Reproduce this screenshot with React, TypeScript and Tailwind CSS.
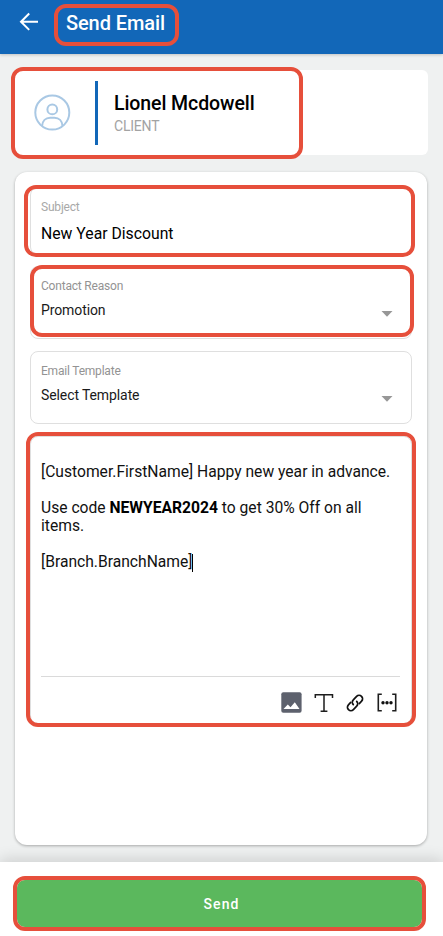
import type { ReactNode } from "react";
import clsx from "clsx";

// red rounded frame drawn over the area it annotates
function Callout({ className }: { className: string }) {
  return (
    <span
      className={clsx(
        "pointer-events-none absolute z-10 rounded-[12px] border-4 border-[#e64f3b]",
        className
      )}
    />
  );
}

function AvatarIcon() {
  return (
    <svg width="38" height="38" viewBox="0 0 38 38" fill="none" stroke="#a9c8e4" strokeWidth="2">
      <circle cx="19.3" cy="18.6" r="17" />
      <circle cx="19.3" cy="15.4" r="4.9" />
      <path d="M9.1 32c.3-5 3.6-8.2 8-8.2h4.400c4.400 0 7.700 3.200 8 8.200" />
    </svg>
  );
}

function ImageIcon() {
  return (
    <svg width="21" height="21" viewBox="0 0 21 21">
      <rect x="0.3" y="0.3" width="20.3" height="20.4" rx="2" fill="#5d616d" />
      <path d="M2.500 17l4.300-4.500 2.700 2.700 4.300-5 4.700 6.800z" fill="#fff" />
    </svg>
  );
}

function TextIcon() {
  return (
    <svg width="20" height="20" viewBox="0 0 20 20" fill="none" stroke="#1d1d1d" strokeWidth="1.5">
      <path d="M1.300 5V1.800h17.200V5M10 1.800v16.500M6.600 18.300h6.800" />
    </svg>
  );
}

function LinkIcon() {
  return (
    <svg
      width="18"
      height="18"
      viewBox="0 0 18 18"
      fill="none"
      stroke="#111"
      strokeWidth="1.7"
      strokeLinecap="round"
    >
      <path d="M7.3 10.7a3.4 3.4 0 0 1 0-4.8l3.300-3.500a3.450 3.450 0 0 1 5 4.800l-2.300 2.400" />
      <path d="M10.7 7.3a3.4 3.4 0 0 1 0 4.8l-3.300 3.500a3.450 3.450 0 0 1-5-4.800l2.300-2.400" />
    </svg>
  );
}

function PlaceholderIcon() {
  return (
    <svg width="20" height="19" viewBox="0 0 20 19" fill="none" stroke="#1d1d1d" strokeWidth="1.6">
      <path d="M4.800 1.300H1.300v16.400h3.500M15.200 1.300h3.500v16.400h-3.500" />
      <g fill="#111" stroke="none">
        <circle cx="6" cy="9.800" r="1.700" />
        <circle cx="10" cy="9.800" r="1.700" />
        <circle cx="14" cy="9.800" r="1.700" />
      </g>
    </svg>
  );
}

function Caret() {
  return (
    <svg width="12" height="6" viewBox="0 0 12 6" className="mr-[18px]">
      <path d="M0.500 0h11L6 5.800z" fill="#979797" />
    </svg>
  );
}

function SelectField({
  label,
  value,
  children,
}: {
  label: string;
  value: string;
  children?: ReactNode;
}) {
  return (
    <div className="relative h-[73px] rounded-[8px] border border-[#dfdfdf] pl-[10px] pt-[11px]">
      <div className="text-[12px] leading-4 tracking-[-0.2px] text-[#939393]">{label}</div>
      <div className="mt-[7px] flex items-center justify-between text-[14px] leading-[18px] tracking-[-0.1px] text-[#1a1a1a]">
        <span>{value}</span>
        <span className="pt-2">
          <Caret />
        </span>
      </div>
      {children}
    </div>
  );
}

export default function App() {
  return (
    <div className="flex h-[936px] w-[443px] flex-col overflow-hidden bg-[#eff1f1] font-[Roboto,sans-serif] text-black">
      <header className="relative z-10 flex h-[54px] shrink-0 items-start bg-[#1267b8] shadow-[0_1px_3px_rgba(0,0,0,0.2)]">
        <svg
          width="20"
          height="20"
          viewBox="0 0 20 20"
          fill="none"
          stroke="#fff"
          strokeWidth="2"
          className="ml-[19px] mt-[12px]"
        >
          <path d="M19 9.700H2.500M10.200 1.500L2 9.700l8.200 8.200" />
        </svg>
        <h1 className="relative ml-[27px] mt-[11px] text-[20px] font-medium leading-6 tracking-[-0.1px] text-white">
          Send Email
          <Callout className="-left-[12px] -top-[7px] h-[42px] w-[125px]" />
        </h1>
      </header>

      <main className="flex flex-1 flex-col pl-[15px] pr-4">
        <section className="relative -mr-px mt-4 flex h-[85px] items-center rounded-[6px] bg-white">
          <div className="ml-[18px]">
            <AvatarIcon />
          </div>
          <div className="ml-6 mt-px h-[64px] w-[3px] bg-[#1267b8]" />
          <div className="ml-4 pt-[3px]">
            <div className="text-[19.5px] font-medium leading-6 tracking-[-0.08px]">Lionel Mcdowell</div>
            <div className="text-[14px] leading-5 tracking-[-0.2px] text-[#a3a3a3]">CLIENT</div>
          </div>
          <Callout className="-left-[4px] -top-[3px] h-[92px] w-[292px]" />
        </section>

        <section className="mt-[17px] flex h-[673px] flex-col rounded-[12px] bg-white px-[15px] pt-[15px] shadow-[0_1px_3px_rgba(0,0,0,0.3)]">
          <div className="relative h-[68px] rounded-[8px] border border-[#dfdfdf] pl-[10px] pt-[11px]">
            <div className="text-[12px] leading-4 tracking-[-0.2px] text-[#a8a8a8]">Subject</div>
            <div className="mt-[9px] text-[15.75px] leading-5">New Year Discount</div>
            <Callout className="-left-[7px] -top-[3px] h-[72px] w-[391px]" />
          </div>

          <div className="mt-[11px] flex flex-col gap-3">
            <SelectField label="Contact Reason" value="Promotion">
              <Callout className="-left-px -top-[2px] h-[72px] w-[384px]" />
            </SelectField>
            <SelectField label="Email Template" value="Select Template" />
          </div>

          <div className="relative mt-3 flex h-[288px] flex-col rounded-[8px] border border-[#dfdfdf] pl-[10px] pr-[11px] pt-[26px]">
            <div className="flex-1 text-[15.65px] leading-[18.1px] text-[#111]">
              <p>[Customer.FirstName] Happy new year in advance.</p>
              <br />
              <p>
                Use code <b className="font-bold text-black">NEWYEAR2024</b> to get 30% Off on all
                <br />
                items.
              </p>
              <br />
              <p className="flex items-center">
                [Branch.BranchName]
                <span className="h-[18px] w-px bg-black" />
              </p>
            </div>
            <div className="flex h-[47px] items-center justify-end gap-[12px] border-t border-[#dadada] pr-[3px] pt-[5px]">
              <ImageIcon />
              <TextIcon />
              <LinkIcon />
              <span className="ml-px">
                <PlaceholderIcon />
              </span>
            </div>
            <Callout className="-left-[5px] -top-[5px] h-[295px] w-[390px]" />
          </div>
        </section>
      </main>

      <footer className="h-[74px] shrink-0 bg-white pl-[17px] pr-[21px] pt-[18px] shadow-[0_-3px_14px_rgba(0,0,0,0.14)]">
        <button className="relative block h-[47px] w-full rounded-[8px] bg-[#5bb85d] pl-[4px] pt-px text-[14px] font-medium tracking-[1.1px] text-white">
          Send
          <Callout className="-inset-1" />
        </button>
      </footer>
    </div>
  );
}
